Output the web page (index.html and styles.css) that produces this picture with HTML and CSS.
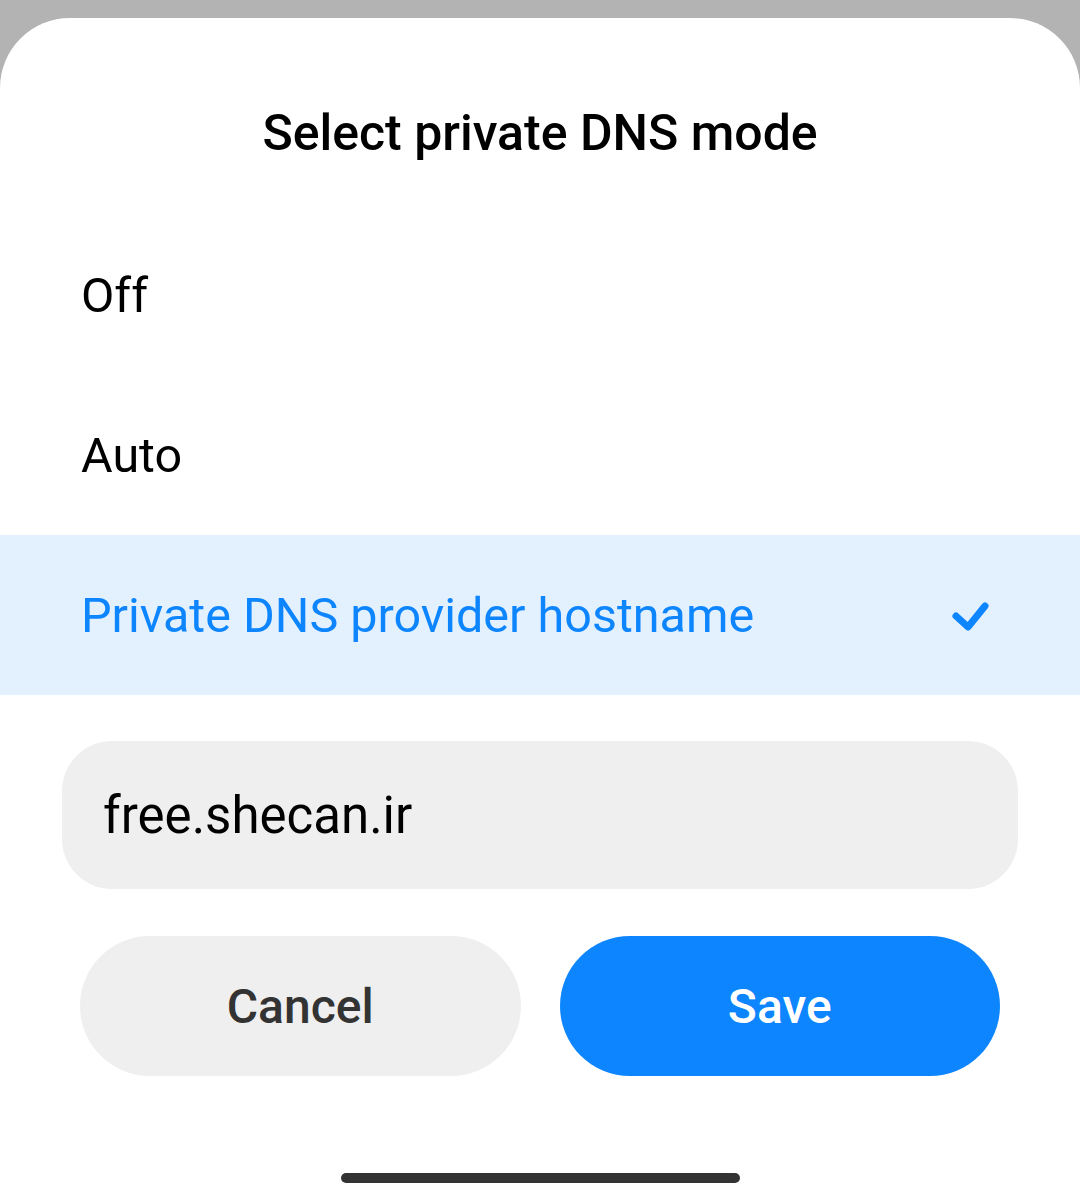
FILE: index.html
```html
<!DOCTYPE html>
<html lang="en">

<head>
    <meta charset="UTF-8">
    <meta name="viewport" content="width=device-width, initial-scale=1.0">
    <title>Select private DNS mode</title>
    <link rel="stylesheet" href="styles.css">
</head>

<body>
    <div class="sheet">
        <h1 class="sheet-title">Select private DNS mode</h1>
        <!-- Mode options -->
        <div class="options">
            <div class="option">Off</div>
            <div class="option">Auto</div>
            <div class="option selected">
                <span>Private DNS provider hostname</span>
                <svg class="check" width="48" height="48" viewBox="0 0 48 48">
                    <path d="M12 25 L24 36 L41 15" fill="none" stroke="#0d85ff" stroke-width="7" stroke-linecap="round" stroke-linejoin="round" />
                </svg>
            </div>
        </div>
        <div class="host-field">
            <input type="text" class="host-input" value="free.shecan.ir">
        </div>
        <div class="actions">
            <button class="btn cancel-btn">Cancel</button>
            <button class="btn save-btn">Save</button>
        </div>
        <div class="home-bar"></div>
    </div>
</body>

</html>
```

FILE: styles.css
```css
* {
    margin: 0;
    padding: 0;
    box-sizing: border-box;
    font-family: 'Roboto', 'Noto Sans', sans-serif;
}

body {
    background-color: #b3b3b3;
    min-height: 1200px;
    padding-top: 18px;
}

.sheet {
    background-color: #ffffff;
    border-radius: 70px 70px 0 0;
    height: 1182px;
    display: flex;
    flex-direction: column;
}

.sheet-title {
    font-size: 50px;
    font-weight: 500;
    color: #000000;
    text-align: center;
    height: 197px;
    padding-top: 33px;
    display: flex;
    align-items: center;
    justify-content: center;
}

.options {
    display: flex;
    flex-direction: column;
}

.option {
    height: 160px;
    display: flex;
    align-items: center;
    justify-content: space-between;
    padding: 0 88px 0 81px;
    font-size: 48.5px;
    color: #000000;
}

.option.selected {
    background-color: #e3f0fd;
    color: #0d85ff;
}

.check {
    display: block;
}

.host-field {
    padding: 46px 62px 0 62px;
}

.host-input {
    width: 100%;
    height: 148px;
    border: none;
    outline: none;
    border-radius: 50px;
    background-color: #efefef;
    padding: 0 41px;
    font-size: 51px;
    color: #000000;
}

.actions {
    display: flex;
    gap: 39px;
    padding: 47px 80px 0 80px;
}

.btn {
    flex: 1;
    height: 140px;
    border: none;
    border-radius: 70px;
    font-size: 48px;
    font-weight: 500;
    cursor: pointer;
}

.cancel-btn {
    background-color: #efefef;
    color: #333333;
}

.save-btn {
    background-color: #0d85ff;
    color: #ffffff;
}

.home-bar {
    width: 399px;
    height: 10px;
    border-radius: 5px;
    background-color: #333333;
    margin: 97px auto 0 auto;
}
```
